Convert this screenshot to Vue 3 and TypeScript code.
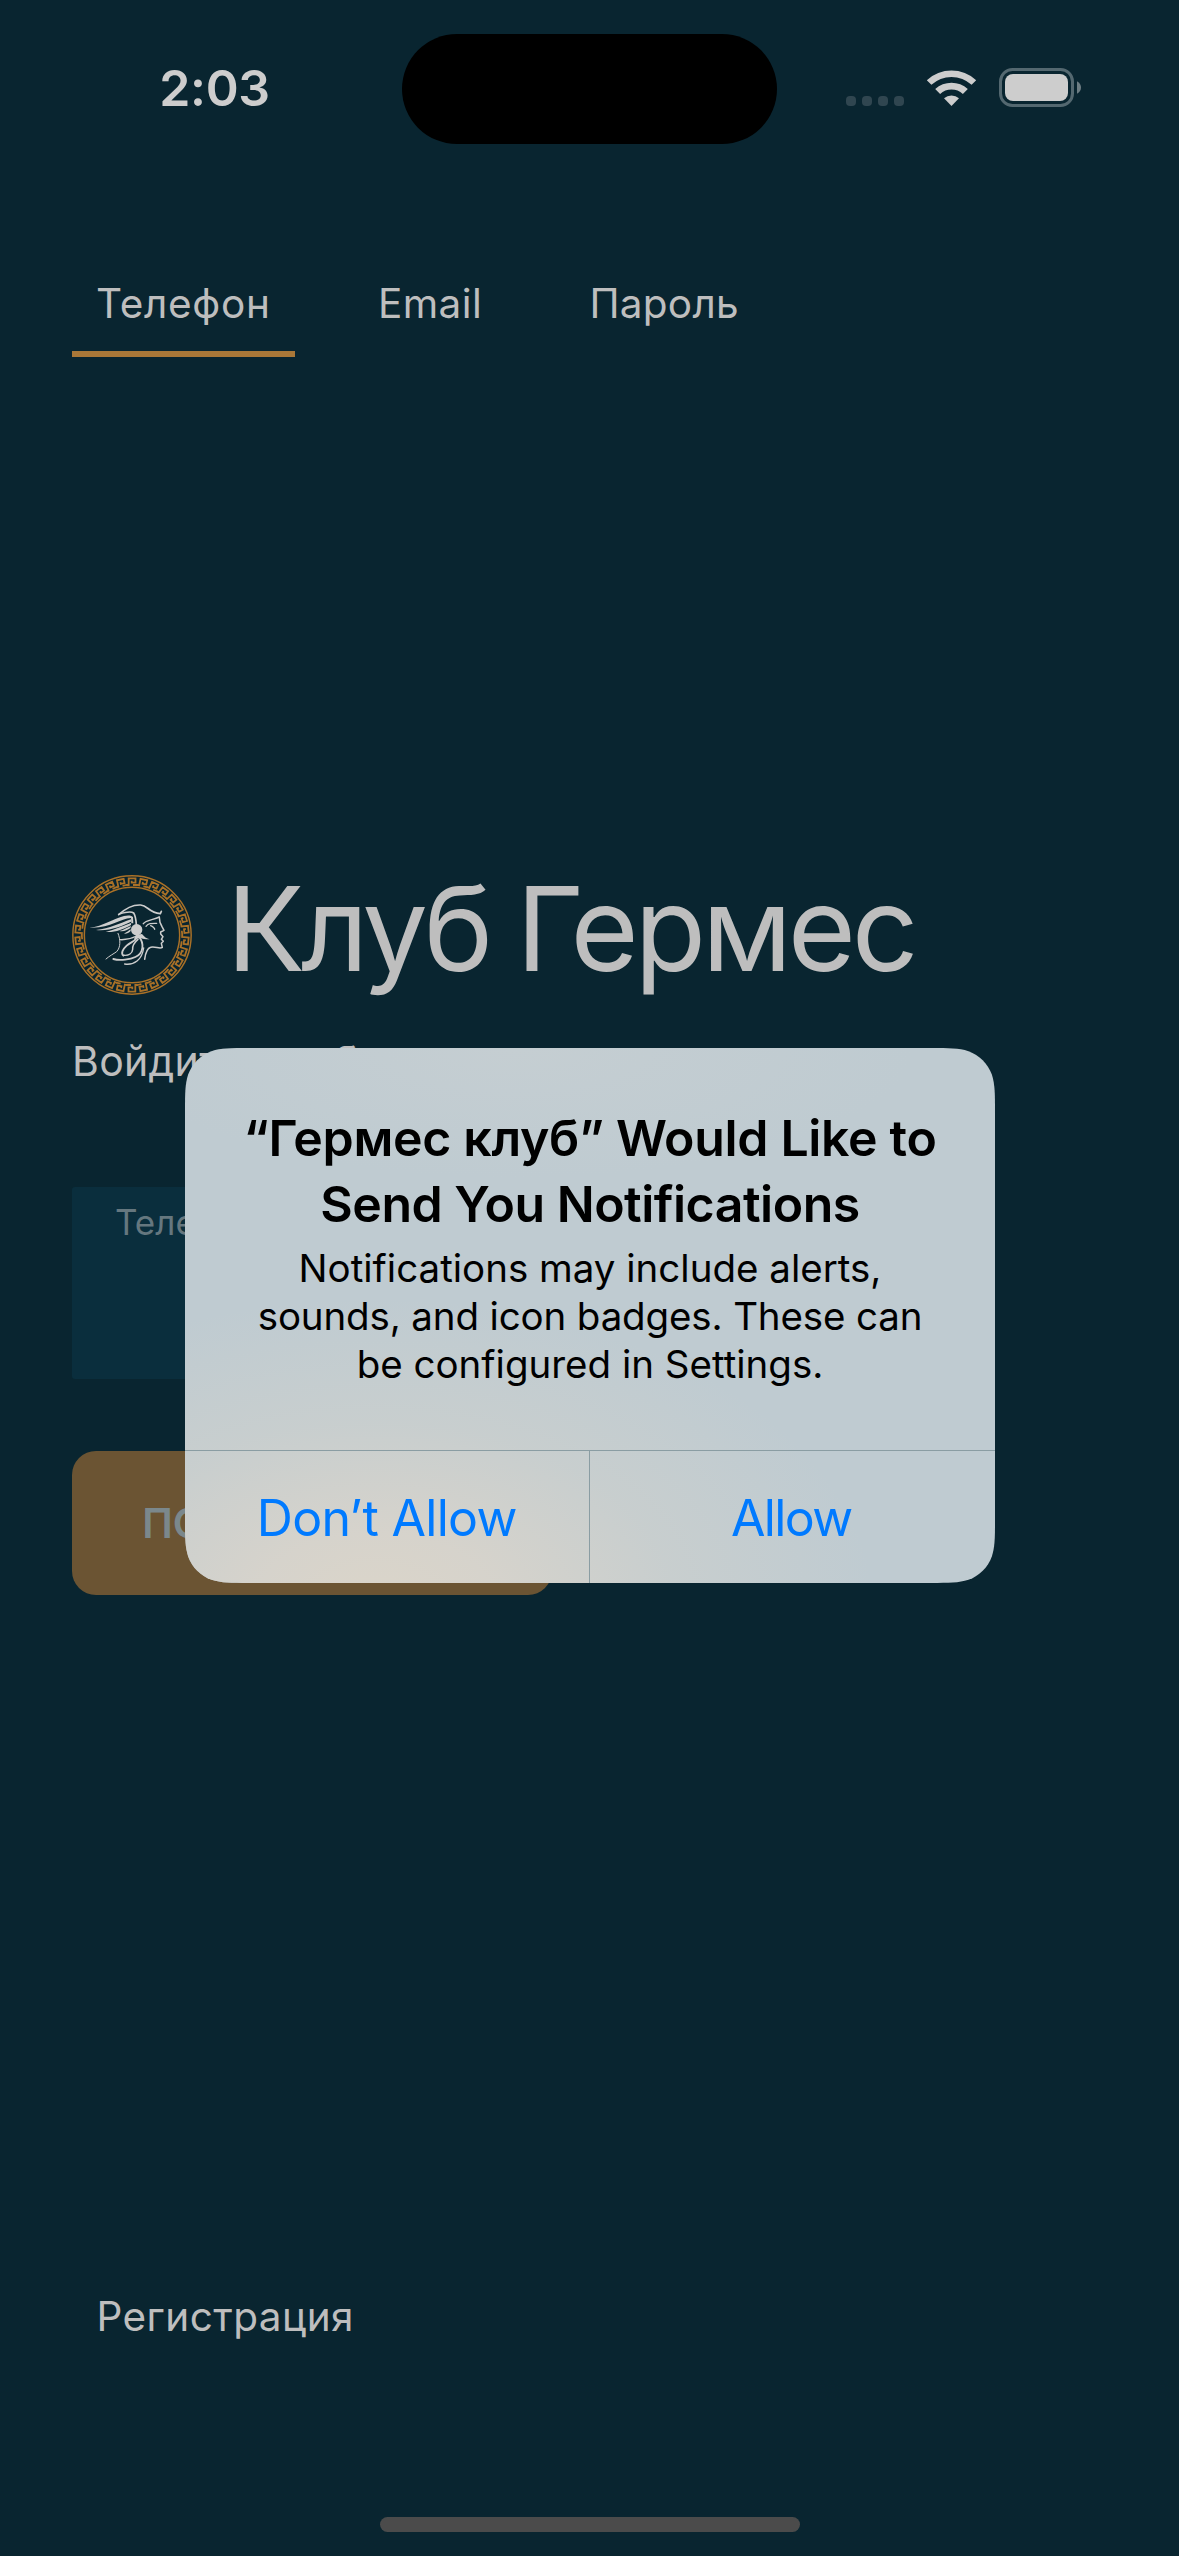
<script setup lang="ts">
const tabs = [
  { label: 'Телефон', spacing: 0.71, active: true },
  { label: 'Email', spacing: 0.4, active: false },
  { label: 'Пароль', spacing: 0.26, active: false },
]

const KEY_COUNT = 30
const keyAngles = Array.from({ length: KEY_COUNT }, (_, i) => (i * 360) / KEY_COUNT)

// Outline of a rounded rectangle with iOS-style continuous corners
function continuousRect(w: number, h: number, r: number): string {
  const a = 1.528665 * r
  const b = 1.088493 * r
  const c = 0.868407 * r
  const d = 0.631494 * r
  const e = 0.074911 * r
  const f = 0.372824 * r
  const g = 0.16906 * r
  return [
    `M${a} 0L${w - a} 0`,
    `C${w - b} 0 ${w - c} 0 ${w - d} ${e}C${w - f} ${g} ${w - g} ${f} ${w - e} ${d}C${w} ${c} ${w} ${b} ${w} ${a}`,
    `L${w} ${h - a}`,
    `C${w} ${h - b} ${w} ${h - c} ${w - e} ${h - d}C${w - g} ${h - f} ${w - f} ${h - g} ${w - d} ${h - e}C${w - c} ${h} ${w - b} ${h} ${w - a} ${h}`,
    `L${a} ${h}`,
    `C${b} ${h} ${c} ${h} ${d} ${h - e}C${f} ${h - g} ${g} ${h - f} ${e} ${h - d}C0 ${h - c} 0 ${h - b} 0 ${h - a}`,
    `L0 ${a}`,
    `C0 ${b} 0 ${c} ${e} ${d}C${g} ${f} ${f} ${g} ${d} ${e}C${c} 0 ${b} 0 ${a} 0Z`,
  ].join('')
}
const alertShape = `path('${continuousRect(810, 535, 42)}')`
</script>

<template>
  <div class="screen">
    <header class="status">
      <span class="time">2:03</span>
      <div class="island"></div>
      <div class="indicators">
        <div class="dots"><i v-for="n in 4" :key="n"></i></div>
        <svg class="wifi" width="52" height="38" viewBox="0 0 52 38">
          <path d="M0.8 11.2A36.5 36.5 0 0 1 50.2 11.2L45.6 15.8A29.5 29.5 0 0 0 5.4 15.8Z" />
          <path d="M9.2 20A24.2 24.2 0 0 1 41.8 20L36.9 24.9A17.2 17.2 0 0 0 14.1 24.9Z" />
          <path d="M18 29.2A11.8 11.8 0 0 1 33 29.2L25.5 37Z" />
        </svg>
        <svg class="battery" width="84" height="40" viewBox="0 0 84 40">
          <rect x="1.5" y="1.5" width="72" height="36" rx="12" fill="none" stroke="#546870" stroke-width="3" />
          <rect x="6" y="6" width="63" height="27" rx="8" fill="#cdcdcd" />
          <path d="M78 13.2Q82 15.5 82 19.5T78 25.8Z" fill="#6d7d83" />
        </svg>
      </div>
    </header>

    <nav class="tabs">
      <div
        v-for="tab in tabs"
        :key="tab.label"
        class="tab"
        :class="{ active: tab.active }"
        :style="{ letterSpacing: tab.spacing + 'px' }"
      >
        {{ tab.label }}
      </div>
    </nav>

    <main class="login">
      <div class="brand">
        <svg class="logo" width="120" height="120" viewBox="36 45 360 360" fill="none">
          <g stroke="#aa7127">
            <circle cx="216" cy="225" r="177.5" stroke-width="4.4" />
            <circle cx="216" cy="225" r="143" stroke-width="4.4" />
            <g stroke-width="5.4">
              <path
                v-for="angle in keyAngles"
                :key="angle"
                :transform="`translate(216 225) rotate(${angle}) translate(0 -160.5)`"
                d="M-17 10.5H-10V-9.5H10.5V3.5H-1V-2M3 10.5H17"
              />
            </g>
          </g>
          <g stroke="#cdcdcd" stroke-linecap="round" stroke-linejoin="round">
            <path d="M176 164C198 144 224 134 242 135C264 137 266 158 301 161L304 154" stroke-width="5" />
            <path d="M178 162C198 156 214 154 221 159C227 168 228 180 229 194" stroke-width="5" />
            <path d="M250 191C258 180 280 180 298 171" stroke-width="4.5" />
            <path d="M258 199C266 189 275 190 290 190M272 197C278 200 284 203 284 208" stroke-width="4" />
            <path d="M298 172L300 187L306 200L312 211L302 216L302 222L309 230L304 238L310 244L304 250L307 262C300 268 284 258 272 262C262 265 256 282 254 298" stroke-width="4.5" />
            <path d="M174 220C182 240 182 262 170 275C160 282 148 288 138 297" stroke-width="3" />
            <path d="M160 297C180 303 212 298 226 291C252 280 252 248 238 232" stroke-width="5.5" />
            <path d="M194 312C222 316 246 300 251 264" stroke-width="4" />
            <path d="M230 234C222 246 212 246 200 257C188 268 182 280 190 287" stroke-width="5.5" />
            <path d="M234 238C220 250 217 258 218 268C217 280 206 287 192 286" stroke-width="4.5" />
            <path d="M230 228C214 236 196 240 180 239" stroke-width="4" />
          </g>
          <g fill="#cdcdcd">
            <path d="M88 203C130 199 160 176 192 168C204 165 216 166 219 172L220 190L214 190L213 174C180 176 150 206 88 203Z" />
            <path d="M108 210C150 206 178 190 213 178L213 185C185 198 150 214 108 210Z" />
            <path d="M137 216C165 208 186 200 213 189L213 195C190 208 165 218 137 216Z" />
            <path d="M178 213C192 209 202 203 213 198L211 204C202 211 192 215 178 213Z" />
            <path d="M192 221C200 217 206 212 212 208L212 213C206 219 200 222 192 221Z" />
            <circle cx="230" cy="209" r="17" />
            <path d="M228 224L246 222C252 230 260 236 269 238C256 238 246 236 241 234L222 238Z" />
          </g>
        </svg>
        <h1>Клуб Гермес</h1>
      </div>
      <p class="subtitle">Войдите, чтобы</p>
      <div class="field"><label>Телефон</label></div>
      <button class="submit">ПОЛУЧИТЬ КОД</button>
    </main>

    <a class="register">Регистрация</a>
    <div class="home"></div>

    <section class="alert" :style="{ clipPath: alertShape }">
      <div class="message">
        <h2>
          <span class="l1">“Гермес клуб” Would Like to</span><br />
          <span class="l2">Send You Notifications</span>
        </h2>
        <p>Notifications may include alerts,<br /><span class="l3">sounds, and icon badges. These can</span><br />be configured in Settings.</p>
      </div>
      <div class="actions">
        <div class="action deny">Don’t Allow</div>
        <div class="action allow">Allow</div>
      </div>
    </section>
  </div>
</template>

<style>
body {
  margin: 0;
  background: #092530;
}
</style>

<style scoped>
.screen {
  position: relative;
  box-sizing: border-box;
  width: 1179px;
  height: 2556px;
  overflow: hidden;
  display: flex;
  flex-direction: column;
  background: #092530;
  color: #bebebe;
  font-family: Inter, "Liberation Sans", sans-serif;
}

.status {
  display: flex;
  align-items: flex-start;
  height: 270px;
  flex: none;
}

.time {
  width: 242.7px;
  margin: 58px 0 0 159.3px;
  font-size: 50px;
  line-height: 60px;
  font-weight: 600;
  letter-spacing: -0.36px;
  color: #cdcdcd;
}

.island {
  width: 375px;
  height: 110px;
  margin-top: 34px;
  border-radius: 55px;
  background: #000;
}

.indicators {
  display: flex;
  margin: 68px 0 0 69px;
}

.dots {
  display: flex;
  gap: 6px;
  margin-top: 28px;
}

.dots i {
  width: 10px;
  height: 10px;
  border-radius: 4px;
  background: #304650;
}

.wifi {
  margin: 0.5px 0 0 22px;
  fill: #cdcdcd;
}

.battery {
  margin-left: 21px;
}

.tabs {
  display: flex;
  gap: 59.3px;
  height: 87px;
  padding-left: 72px;
  flex: none;
}

.tab {
  box-sizing: border-box;
  height: 87px;
  padding: 9px 24px 0;
  font-size: 40.5px;
  line-height: 50px;
}

.tab.active {
  border-bottom: 6px solid #aa7838;
}

.login {
  display: flex;
  flex-direction: column;
  align-items: flex-start;
  height: 1922px;
  box-sizing: border-box;
  padding: 518px 0 0 72px;
  flex: none;
}

.brand {
  display: flex;
  align-items: flex-start;
  gap: 34.5px;
  height: 120px;
}

h1 {
  margin: 0;
  font-size: 117px;
  line-height: 107px;
  font-weight: 400;
  letter-spacing: -4.2px;
  word-spacing: -1.5px;
  white-space: nowrap;
}

.subtitle {
  margin: 41px 0 0;
  font-size: 41px;
  line-height: 50px;
  letter-spacing: 0.3px;
}

.field {
  box-sizing: border-box;
  width: 700px;
  height: 192px;
  margin-top: 101px;
  padding: 15px 43px;
  border-radius: 3px;
  background: #0a2e3d;
  color: #65777f;
  font-size: 35px;
  line-height: 40px;
}

.submit {
  width: 480px;
  height: 144px;
  margin-top: 72px;
  padding: 0;
  border: 0;
  border-radius: 24px;
  background: #6b5433;
  color: #7b888c;
  font: 600 41px/143px Inter, "Liberation Sans", sans-serif;
  letter-spacing: 0.1px;
}

.register {
  margin: 13px 0 0 96.5px;
  font-size: 40.5px;
  line-height: 50px;
  letter-spacing: 0.43px;
}

.home {
  width: 420px;
  height: 15px;
  margin: 175px auto 0;
  border-radius: 8px;
  background: #4b4b4b;
  flex: none;
}

.alert {
  position: absolute;
  left: 185px;
  top: 1048px;
  width: 810px;
  height: 535px;
  display: flex;
  flex-direction: column;
  color: #000;
  background:
    radial-gradient(ellipse 500px 310px at 190px 560px, #dbd5c9 0%, rgba(217, 212, 203, 0.88) 25%, rgba(208, 209, 204, 0.52) 60%, rgba(196, 206, 208, 0) 100%),
    radial-gradient(ellipse 400px 130px at 330px 0, #c5ced2, rgba(197, 206, 210, 0)),
    #bfcbd1;
}

.message {
  flex: 1;
  padding-top: 57px;
  text-align: center;
}

h2 {
  margin: 0;
  font-size: 50px;
  line-height: 66px;
  font-weight: 600;
}

.l1 { letter-spacing: -0.33px; }
.l2 { letter-spacing: -0.5px; }
.l3 { letter-spacing: -0.14px; }

.message p {
  margin: 7px 0 0;
  font-size: 38.5px;
  line-height: 48px;
}

.actions {
  display: flex;
  height: 132px;
  border-top: 1px solid #8a9da3;
}

.action {
  flex: 1;
  text-align: center;
  font-size: 50px;
  line-height: 134px;
  color: #007aff;
}

.deny {
  letter-spacing: -0.7px;
}

.allow {
  border-left: 1px solid #8a9da3;
  letter-spacing: -1.6px;
  padding-right: 2px;
}
</style>
